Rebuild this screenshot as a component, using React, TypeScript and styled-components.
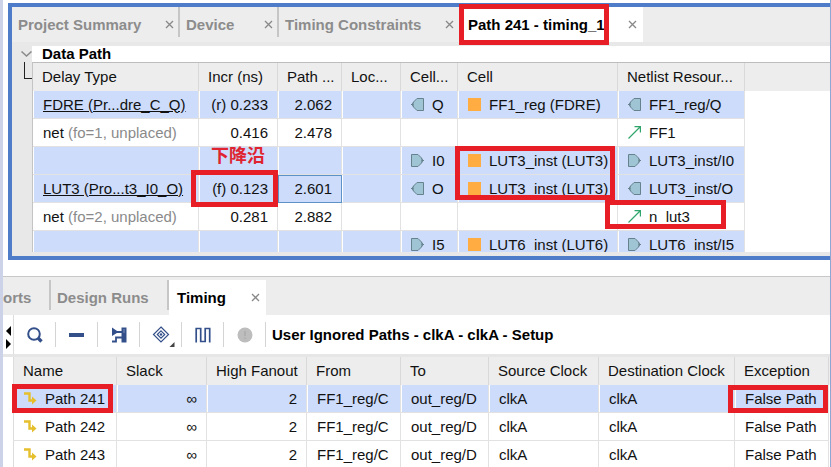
import React from "react";
import styled, { createGlobalStyle, css } from "styled-components";

const GlobalStyle = createGlobalStyle`
  *, *::before, *::after { box-sizing: border-box; }
  body {
    margin: 0;
    background: #fff;
    color: #111;
    font: 15px/20px "Liberation Sans", Arial, "Noto Sans CJK SC", sans-serif;
  }
  button { font: inherit; color: inherit; background: none; border: 0; padding: 0; cursor: pointer; }
`;

const Page = styled.div`
  height: 100vh;
  overflow: hidden;
  border-left: 3px solid #ccd3e8;
  border-right: 1px solid #8fa6d2;
`;

const PathPanel = styled.section`
  margin: 3px 0 0 5px;
  border: 4px solid #4f7cc8;
  border-right: 0;
  background: #e8e8e8;
`;

const TabBar = styled.div`
  display: flex;
  height: 35px;
  background: #ededed;
`;

const Tab = styled.div<{ $width: number; $active?: boolean; $divider?: boolean }>`
  position: relative;
  display: flex;
  flex: none;
  align-items: center;
  justify-content: space-between;
  width: ${(p) => p.$width}px;
  padding: 0 6px 0 ${(p) => (p.$active ? 8 : 6)}px;
  color: ${(p) => (p.$active ? "#000" : "#8c8c8c")};
  background: ${(p) => (p.$active ? "#fff" : "transparent")};
  ${(p) =>
    p.$divider &&
    css`
      background: linear-gradient(#c6c6c6, #c6c6c6) right top / 2px 30px no-repeat;
    `}
`;

const TabLabel = styled.button`
  && { font-weight: bold; }
  white-space: nowrap;
`;

const ClippedLabel = styled(TabLabel)`
  margin-left: -6px;
`;

const CloseButton = styled.button`
  display: flex;
  svg { display: block; }
`;

const Mark = styled.span<{ $inset: string }>`
  position: absolute;
  inset: ${(p) => p.$inset};
  border: 5px solid #e81e26;
  z-index: 2;
  pointer-events: none;
`;

const PathBody = styled.div`
  display: grid;
  grid-template-columns: 20px 1fr;
  margin-top: 4px;
`;

const Toggle = styled.button`
  display: flex;
  align-items: center;
  justify-content: flex-end;
  height: 16px;
`;

const PathTitle = styled.h2`
  margin: 0;
  padding-left: 10px;
  height: 16px;
  font-size: 15px;
  line-height: 16px;
  color: #000;
  background: #fff;
`;

const Elbow = styled.div`
  width: 8px;
  height: 17px;
  justify-self: end;
  border: solid #222;
  border-width: 0 0 1px 1px;
`;

const TableClip = styled.div`
  height: 190px;
  overflow: hidden;
  border-top: 1px solid #bdbdbd;
  border-left: 1px solid #c4c4c4;
  background: #fff;
`;

const PanelFoot = styled.div`
  height: 4px;
  background: #e8e8e8;
`;

const Table = styled.table`
  width: 100%;
  table-layout: fixed;
  border-collapse: separate;
  border-spacing: 0;
`;

const Col = styled.col<{ $width?: number }>`
  width: ${(p) => (p.$width ? `${p.$width}px` : "auto")};
`;

const Th = styled.th`
  height: 28px;
  padding: 0 0 0 9px;
  text-align: left;
  font-weight: normal;
  white-space: nowrap;
  background: #ededed;
  border-right: 1px solid #d9d9d9;
  &:last-child { border-right: 0; }
`;

const Row = styled.tr<{ $selected?: boolean }>`
  --fill: ${(p) => (p.$selected ? "#ccdcfa" : "#fff")};
`;

const Td = styled.td<{ $right?: boolean; $focus?: boolean }>`
  position: relative;
  height: 28px;
  padding: 0 9px 0 10px;
  text-align: ${(p) => (p.$right ? "right" : "left")};
  white-space: nowrap;
  background: var(--fill);
  border-right: 1px solid #e2e2e2;
  border-bottom: 1px solid #e2e2e2;
  box-shadow: inset 1px 0 #fff;
  ${(p) =>
    p.$focus &&
    css`
      outline: 1px solid #5b93c6;
      outline-offset: -1px;
    `}
`;

const Blank = styled.td`
  padding: 0;
  background: #fff;
`;

const WithIcon = styled.span`
  display: flex;
  align-items: center;
  gap: 8px;
  svg { flex: none; }
`;

const CellLink = styled.a`
  color: inherit;
  text-decoration: underline;
`;

const Faint = styled.span`
  color: #8a8a8a;
`;

const Note = styled.strong`
  position: absolute;
  inset: 0 0 auto;
  text-align: center;
  font: bold 18px/14px "Noto Sans CJK SC", sans-serif;
  color: #df2430;
`;

const TimingPanel = styled.section`
  margin-top: 16px;
  border-top: 1px solid #c8c8c8;
`;

const TimingTabs = styled(TabBar)`
  height: 38px;
  padding-top: 3px;
`;

const Toolbar = styled.div`
  display: flex;
  align-items: center;
  height: 39px;
`;

const Scrollers = styled.div`
  display: flex;
  flex-direction: column;
  align-items: center;
  justify-content: space-evenly;
  align-self: stretch;
  width: 11px;
  padding: 8px 0 2px;
  border-right: 1px solid #ddd;
  button { display: flex; }
`;

const Tool = styled.button`
  display: flex;
  align-items: center;
  justify-content: center;
  width: 42px;
  height: 25px;
  && { border-right: 1px solid #d4d4d4; }
`;

const ToolbarTitle = styled.h2`
  margin: 0 0 0 6px;
  font-size: 15px;
  color: #000;
  white-space: nowrap;
`;

const TimingGrid = styled.div`
  border-top: 3px solid #e6e6e6;
  padding-left: 10px;
  th:first-child, td:first-child { border-left: 1px solid #ddd; }
`;

function CloseIcon() {
  return (
    <svg width="9" height="9" viewBox="0 0 9 9" fill="none" stroke="#888" strokeWidth="1.3">
      <path d="M1 1L8 8M8 1L1 8" />
    </svg>
  );
}

function PinOut() {
  return (
    <svg width="13" height="13" viewBox="0 0 13 13" fill="#9fc4d3" stroke="#66828e">
      <path d="M12.5 .5H6L2.5 4V9L6 12.5H12.5Z" />
      <path d="M0 6.5H2.5M2.5 4L1 6.5L2.5 9" />
    </svg>
  );
}

function PinIn() {
  return (
    <svg width="13" height="13" viewBox="0 0 13 13" fill="#9fc4d3" stroke="#66828e">
      <path d="M.5 .5H7L10.5 4V9L7 12.5H.5Z" />
      <path d="M13 6.5H10.5M10.5 4L12 6.5L10.5 9" />
    </svg>
  );
}

function CellIcon() {
  return (
    <svg width="13" height="13" viewBox="0 0 13 13">
      <rect width="13" height="13" fill="#ffad42" />
    </svg>
  );
}

function NetIcon() {
  return (
    <svg width="13" height="13" viewBox="0 0 13 13" fill="none" stroke="#2fa56b" strokeWidth="1.2">
      <path d="M.5 12.5L12 1M6.5 .6H12.4V6.5" />
    </svg>
  );
}

function PathIcon() {
  return (
    <svg width="13" height="13" viewBox="0 0 13 13">
      <path d="M0 1.5H5.5V8.5H9" fill="none" stroke="#e6bf2c" strokeWidth="2.4" />
      <path d="M8 4.5L12.5 8.5L8 12.5Z" fill="#e6bf2c" />
    </svg>
  );
}

const blue = "#34508a";

function SearchIcon() {
  return (
    <svg width="16" height="16" viewBox="0 0 16 16" fill="none" stroke={blue}>
      <circle cx="7" cy="7" r="5.8" strokeWidth="2" />
      <path d="M11 11L14.5 14.5" strokeWidth="3.4" />
    </svg>
  );
}

function MinusIcon() {
  return (
    <svg width="15" height="16" viewBox="0 0 15 16">
      <rect y="6" width="15" height="4" fill={blue} />
    </svg>
  );
}

function SchematicIcon() {
  return (
    <svg width="16" height="16" viewBox="0 0 16 16">
      <path d="M10.5 .5H15.5V15.5H10.5Z" fill={blue} />
      <path d="M1 .5L7.5 5L1 9Z" fill={blue} />
      <path d="M6 5H11M1 14.5H5V10.5H11" fill="none" stroke={blue} strokeWidth="1.8" />
      <path d="M13 2V6" stroke="#8ea2c8" strokeWidth=".8" />
    </svg>
  );
}

function DiamondIcon() {
  return (
    <svg width="28" height="25" viewBox="0 0 28 25" fill="none" stroke={blue}>
      <path d="M14 5L21.5 12.5L14 20L6.5 12.5Z" strokeWidth="1.2" />
      <path d="M14 8.8L17.7 12.5L14 16.2L10.3 12.5Z" strokeWidth="1.2" />
      <circle cx="14" cy="12.5" r="1.2" fill={blue} stroke="none" />
      <path d="M27.5 20V25H22.5Z" fill="#444" stroke="none" />
    </svg>
  );
}

function WaveIcon() {
  return (
    <svg width="16" height="16" viewBox="0 0 16 16" fill="none" stroke={blue} strokeWidth="1.7">
      <path d="M1.2 15.5V1.5H5.7V14.5H10.2V1.5H14.7V15.5" />
    </svg>
  );
}

function InfoIcon() {
  return (
    <svg width="16" height="16" viewBox="0 0 16 16">
      <circle cx="8" cy="8" r="7.5" fill="#bdbdbd" />
      <path d="M8 4V9M8 10.5V12" stroke="#aaa" strokeWidth="1.5" />
    </svg>
  );
}

interface TabItemProps {
  label: string;
  width: number;
  active?: boolean;
  divider?: boolean;
  mark?: string;
  closable?: boolean;
}

function TabItem({ label, width, active, divider, mark, closable = true }: TabItemProps) {
  return (
    <Tab $width={width} $active={active} $divider={divider}>
      <TabLabel>{label}</TabLabel>
      {closable && (
        <CloseButton aria-label={`Close ${label}`}>
          <CloseIcon />
        </CloseButton>
      )}
      {mark && <Mark $inset={mark} />}
    </Tab>
  );
}

interface DelayRow {
  type?: string;
  fanout?: string;
  incr?: string;
  path?: string;
  dir?: "in" | "out";
  pin?: string;
  cell?: string;
  net: string;
  note?: string;
  focus?: boolean;
  incrMark?: string;
  cellMark?: string;
  netMark?: string;
}

const delayRows: DelayRow[] = [
  { type: "FDRE (Pr...dre_C_Q)", incr: "(r) 0.233", path: "2.062", dir: "out", pin: "Q", cell: "FF1_reg (FDRE)", net: "FF1_reg/Q" },
  { fanout: "(fo=1, unplaced)", incr: "0.416", path: "2.478", net: "FF1" },
  { dir: "in", pin: "I0", cell: "LUT3_inst (LUT3)", net: "LUT3_inst/I0", note: "下降沿", cellMark: "-1px 2px -26px -3px" },
  { type: "LUT3 (Pro...t3_I0_O)", incr: "(f) 0.123", path: "2.601", dir: "out", pin: "O", cell: "LUT3_inst (LUT3)", net: "LUT3_inst/O", focus: true, incrMark: "-5px -1px -5px -8px" },
  { fanout: "(fo=2, unplaced)", incr: "0.281", path: "2.882", net: "n_lut3", netMark: "-3px 18px 1px -13px" },
  { dir: "in", pin: "I5", cell: "LUT6_inst (LUT6)", net: "LUT6_inst/I5" },
];

const delayColumns = [
  ["Delay Type", 166],
  ["Incr (ns)", 79],
  ["Path ...", 64],
  ["Loc...", 59],
  ["Cell...", 57],
  ["Cell", 160],
  ["Netlist Resour...", 127],
] as const;

const timingColumns = [
  ["Name", 104],
  ["Slack", 90],
  ["High Fanout", 100],
  ["From", 94],
  ["To", 88],
  ["Source Clock", 110],
  ["Destination Clock", 136],
  ["Exception", 94],
] as const;

function TableHead({ columns }: { columns: readonly (readonly [string, number])[] }) {
  return (
    <>
      <colgroup>
        {columns.map(([name, width]) => (
          <Col key={name} $width={width} />
        ))}
        <Col />
      </colgroup>
      <thead>
        <tr>
          {columns.map(([name]) => (
            <Th key={name}>{name}</Th>
          ))}
          <Th />
        </tr>
      </thead>
    </>
  );
}

function DelayTableRow({ row }: { row: DelayRow }) {
  const pin = row.dir === "in" ? <PinIn /> : <PinOut />;
  return (
    <Row $selected={!!row.dir}>
      <Td>
        {row.type && <CellLink href="#">{row.type}</CellLink>}
        {row.fanout && (
          <>
            net <Faint>{row.fanout}</Faint>
          </>
        )}
      </Td>
      <Td $right>
        {row.incr}
        {row.note && <Note>{row.note}</Note>}
        {row.incrMark && <Mark $inset={row.incrMark} />}
      </Td>
      <Td $right $focus={row.focus}>{row.path}</Td>
      <Td />
      <Td>
        {row.pin && <WithIcon>{pin}{row.pin}</WithIcon>}
      </Td>
      <Td>
        {row.cell && <WithIcon><CellIcon />{row.cell}</WithIcon>}
        {row.cellMark && <Mark $inset={row.cellMark} />}
      </Td>
      <Td>
        <WithIcon>{row.dir ? pin : <NetIcon />}{row.net}</WithIcon>
        {row.netMark && <Mark $inset={row.netMark} />}
      </Td>
      <Blank />
    </Row>
  );
}

export default function App() {
  return (
    <Page>
      <GlobalStyle />
      <PathPanel>
        <TabBar>
          <TabItem label="Project Summary" width={168} divider />
          <TabItem label="Device" width={99} divider />
          <TabItem label="Timing Constraints" width={181} />
          <TabItem label="Path 241 - timing_1" width={183} active mark="-3px 34px -3px -1px" />
        </TabBar>
        <PathBody>
          <Toggle aria-label="Collapse Data Path">
            <svg width="11" height="6" viewBox="0 0 11 6" fill="none" stroke="#8a8a8a" strokeWidth="1.5">
              <path d="M.5 .5L5.5 5L10.5 .5" />
            </svg>
          </Toggle>
          <PathTitle>Data Path</PathTitle>
          <Elbow />
          <TableClip>
            <Table>
              <TableHead columns={delayColumns} />
              <tbody>
                {delayRows.map((row) => (
                  <DelayTableRow key={row.net} row={row} />
                ))}
              </tbody>
            </Table>
          </TableClip>
        </PathBody>
        <PanelFoot />
      </PathPanel>

      <TimingPanel>
        <TimingTabs>
          <Tab $width={48} $divider>
            <ClippedLabel>orts</ClippedLabel>
          </Tab>
          <TabItem label="Design Runs" width={118} divider closable={false} />
          <TabItem label="Timing" width={97} active />
        </TimingTabs>
        <Toolbar>
          <Scrollers>
            <button aria-label="Scroll left">
              <svg width="5" height="10" viewBox="0 0 5 10"><path d="M5 0V10L0 5Z" /></svg>
            </button>
            <button aria-label="Scroll right">
              <svg width="5" height="10" viewBox="0 0 5 10"><path d="M0 0V10L5 5Z" /></svg>
            </button>
          </Scrollers>
          <Tool aria-label="Search"><SearchIcon /></Tool>
          <Tool aria-label="Collapse all"><MinusIcon /></Tool>
          <Tool aria-label="Schematic"><SchematicIcon /></Tool>
          <Tool aria-label="Highlight"><DiamondIcon /></Tool>
          <Tool aria-label="Waveform"><WaveIcon /></Tool>
          <Tool aria-label="Messages"><InfoIcon /></Tool>
          <ToolbarTitle>User Ignored Paths - clkA - clkA - Setup</ToolbarTitle>
        </Toolbar>
        <TimingGrid>
          <Table>
            <TableHead columns={timingColumns} />
            <tbody>
              {["Path 241", "Path 242", "Path 243"].map((name, i) => (
                <Row key={name} $selected={i === 0}>
                  <Td>
                    <WithIcon><PathIcon />{name}</WithIcon>
                    {i === 0 && <Mark $inset="-1px 3px -1px -2px" />}
                  </Td>
                  <Td $right>∞</Td>
                  <Td $right>2</Td>
                  <Td>FF1_reg/C</Td>
                  <Td>out_reg/D</Td>
                  <Td>clkA</Td>
                  <Td>clkA</Td>
                  <Td>
                    False Path
                    {i === 0 && <Mark $inset="0 0 -1px -7px" />}
                  </Td>
                  <Blank />
                </Row>
              ))}
            </tbody>
          </Table>
        </TimingGrid>
      </TimingPanel>
    </Page>
  );
}
